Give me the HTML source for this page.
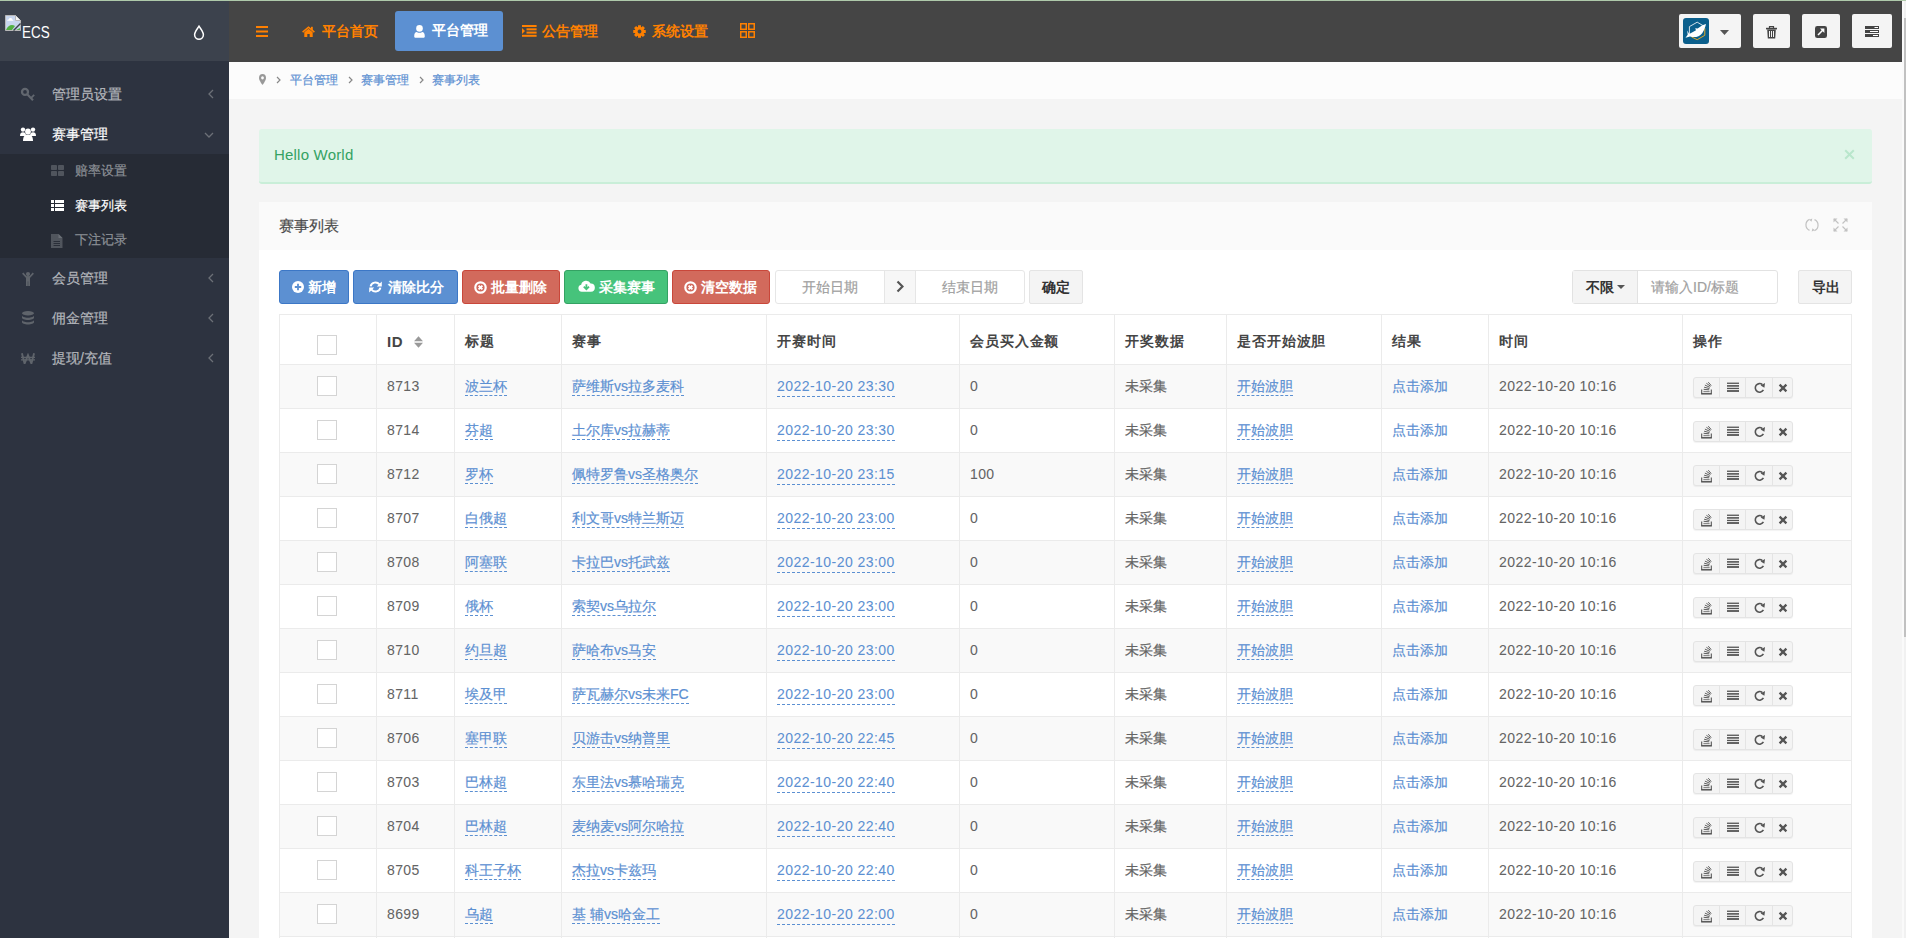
<!DOCTYPE html>
<html><head><meta charset="utf-8"><title>ECS</title>
<style>
*{box-sizing:border-box;margin:0;padding:0}
html,body{width:1906px;height:938px;overflow:hidden}
body{position:relative;background:#f4f4f4;font-family:"Liberation Sans",sans-serif;font-size:14px;color:#646464;-webkit-text-stroke:0.2px currentColor}
.abs{position:absolute}
.nv,#nvact span,.btn,.bdef,#tbl th,.inp span.abs,#logo .ecs,#alert .tx{-webkit-text-stroke:0}
#topline{left:0;top:0;width:1906px;height:1px;background:#aec9aa}
/* sidebar */
#side{left:0;top:1px;width:229px;height:937px;background:#2d3340}
#logo{left:0;top:0;width:229px;height:60px;background:#3c424d}
#logo .bimg{position:absolute;left:5px;top:14px;width:16px;height:16px}
#logo .ecs{position:absolute;left:22px;top:22px;font-size:16px;color:#fff;line-height:20px;transform:scaleX(0.84);transform-origin:0 0}
#logo .drop{position:absolute;left:193px;top:24px}
.mi{position:absolute;left:0;width:229px;height:40px;color:#b3b6bb}
.mi .tx{position:absolute;left:52px;top:11px;line-height:18px;font-size:14px}
.mi .ic{position:absolute;left:20px;top:13px;width:16px;height:14px}
.mi .chev{position:absolute;left:207px;top:14px}
.mi.act{color:#fff}
#sub{left:0;top:153px;width:229px;height:104px;background:#262b35}
.si{position:absolute;left:0;width:229px;height:35px;color:#8d9197}
.si .tx{position:absolute;left:75px;top:8px;line-height:18px;font-size:13px}
.si .ic{position:absolute;left:51px;top:11px}
.si.act{color:#fff}
/* navbar */
#nav{left:229px;top:1px;width:1673px;height:61px;background:#454545}
.nv{position:absolute;top:0;height:61px;color:#ff8000;font-weight:bold;font-size:14px}
.nv .tx{position:absolute;top:21px;line-height:18px;white-space:nowrap}
#nvact{position:absolute;left:166px;top:10px;width:108px;height:40px;background:#5c90d2;border-radius:3px}
.tbtn{position:absolute;top:13px;height:34px;background:#f4f4f4;border-radius:2px}
/* scrollbar */
#sbar{left:1902px;top:1px;width:4px;height:937px;background:#f1f1f1;border-left:2px solid #fafafa}
#sthumb{left:1904px;top:18px;width:2px;height:619px;background:#c1c1c1}
/* breadcrumb */
#bc{left:229px;top:62px;width:1673px;height:37px;background:#fcfcfc}
#bc .t{position:absolute;top:11px;font-size:12px;line-height:14px;color:#5c90d2}
#bc .g{position:absolute;top:10px;font-size:12px;line-height:14px;color:#777}
/* alert */
#alert{left:259px;top:129px;width:1613px;height:55px;background:#e0f5e9;border-bottom:2px solid #c9eed8;border-radius:3px}
#alert .tx{position:absolute;left:15px;top:17px;font-size:15px;line-height:18px;color:#34a263;letter-spacing:0.2px}
#alert .x{position:absolute;left:1585px;top:20px}
/* panel */
#panel{left:259px;top:202px;width:1613px;height:736px;background:#fff}
#ph{left:0;top:0;width:1613px;height:48px;background:#fafafa}
#ph .tx{position:absolute;left:20px;top:15px;font-size:15px;line-height:18px;color:#4a4a4a}
.btn{position:absolute;top:68px;height:34px;border:1px solid;border-radius:3px;color:#fff;font-weight:bold;font-size:14px;white-space:nowrap}
.btn .tx{position:absolute;top:7px;line-height:18px}
.btn .ic{position:absolute;top:10px}
.bp{background:#5c90d2;border-color:#3c77c6}
.bd{background:#d26a5c;border-color:#c9473a}
.bs{background:#46c37b;border-color:#34a263}
.inp{position:absolute;top:68px;height:34px;border:1px solid #e6e6e6;border-radius:3px;background:#fff}
.ph{color:#a0a0a0;position:absolute;top:7px;line-height:18px;white-space:nowrap}
.bdef{position:absolute;top:68px;height:34px;border:1px solid #e4e4e4;border-radius:2px;background:#f4f4f4;color:#333;font-weight:bold}
.bdef .tx{position:absolute;top:7px;line-height:18px;white-space:nowrap}
/* table */
#tbl{position:absolute;left:20px;top:112px;border-collapse:collapse;table-layout:fixed;width:1572px}
#tbl td,#tbl th{border:1px solid #ebebeb;padding:0 0 0 10px;text-align:left;vertical-align:middle;white-space:nowrap;overflow:hidden}
#tbl th{height:50px;font-weight:bold;color:#454545;padding-top:4px;letter-spacing:0.9px}
#tbl td{height:44px;color:#646464;padding-bottom:1px}
#tbl tr.odd td{background:#f9f9f9}
#tbl tr.even td{background:#fff}
#tbl a{color:#5c90d2;border-bottom:1px dashed #5c90d2;text-decoration:none;padding-bottom:1px}
#tbl a.dt,#tbl td.tm{letter-spacing:0.45px}
#tbl a.dt{padding-bottom:2px}
#tbl td:nth-child(2),#tbl td:nth-child(6){letter-spacing:0.4px}
#tbl td:nth-child(2),#tbl td:nth-child(6),#tbl td.tm,#tbl a.dt{-webkit-text-stroke:0.05px currentColor}
#tbl td .cb{position:relative;top:-1px}
#tbl a.cj{position:relative;top:1px}
#tbl .cjt{position:relative;top:0.5px}
#tbl .lk{color:#5c90d2}
#tbl td.c0,#tbl th.c0{padding:0}
.cb{display:block;width:20px;height:20px;border:1px solid #d4d4d4;background:#fff;margin:0 0 0 37px}
.ops{position:relative;top:1px;display:flex;width:100px;height:21px;border:1px solid #e4e4e4;border-radius:3px;background:#f4f4f4;box-shadow:0 1px 1px rgba(0,0,0,.05)}
.op{display:flex;align-items:center;justify-content:center;height:19px;padding-top:2px;border-right:1px solid #e4e4e4}
.o1{width:26px}.o2{width:26px}.o3{width:27px}.o4{width:19px;border-right:0}
</style></head>
<body>
<div id="topline" class="abs"></div>

<div id="side" class="abs">
  <div id="logo" class="abs">
    <svg class="bimg" viewBox="0 0 16 16"><path d="M0.5 0.5h10l5 5v10h-15z" fill="#c8d6ee" stroke="#b8b8b8"/><path d="M10.5 0.5v5h5" fill="#f4f4f4" stroke="#b8b8b8"/><path d="M1 15c2-5 6-6 9-4l-3 4z" fill="#52b043"/><path d="M11 15l4-2v2z" fill="#52b043"/><path d="M15.5 8.5L8.5 15.5" stroke="#3b414b" stroke-width="1.5"/><path d="M2.2 5.8c0-.9.7-1.4 1.5-1.3.4-1 1.2-1.5 2.1-1.4.9.1 1.5.8 1.6 1.6.6 0 1 .5 1 1.1z" fill="#fff"/></svg>
    <div class="ecs">ECS</div>
    <svg class="drop" width="12" height="15" viewBox="0 0 12 15"><path d="M6 1.2C4.5 3.6 1.6 6.8 1.6 9.8a4.4 4.4 0 0 0 8.8 0C10.4 6.8 7.5 3.6 6 1.2z" fill="none" stroke="#fff" stroke-width="1.5"/></svg>
  </div>
  <!-- menu items y relative to side top (1) -->
  <div class="mi" style="top:73px"><svg class="ic" width="16" height="14" viewBox="0 0 16 14" style="width:16px;height:14px"><circle cx="5" cy="4.9" r="3" fill="none" stroke="#62676f" stroke-width="2.3"/><path d="M7.2 7.2L13 13.2" stroke="#62676f" stroke-width="2.1"/><path d="M11.2 10.8L14.2 7.9" stroke="#62676f" stroke-width="1.8"/></svg><span class="tx">管理员设置</span><svg class="chev" width="8" height="12" viewBox="0 0 8 12"><path d="M6 2L2 6l4 4" fill="none" stroke="#6c7077" stroke-width="1.3"/></svg></div>
  <div class="mi act" style="top:113px"><svg class="ic" viewBox="0 0 16 14" style="top:13px"><circle cx="3" cy="2.6" r="2.2" fill="#fff"/><circle cx="13" cy="2.6" r="2.2" fill="#fff"/><circle cx="8" cy="4.4" r="2.9" fill="#fff"/><path d="M0 9c0-3 1.2-3.8 3-3.8s3 .8 3 3.8z" fill="#fff"/><path d="M10 9c0-3 1.2-3.8 3-3.8s3 .8 3 3.8z" fill="#fff"/><path d="M3 14c0-5 2-6.6 5-6.6s5 1.6 5 6.6z" fill="#fff"/></svg><span class="tx">赛事管理</span><svg class="chev" width="12" height="8" viewBox="0 0 12 8" style="left:203px;top:17px"><path d="M2 2l4 4 4-4" fill="none" stroke="#6c7077" stroke-width="1.3"/></svg></div>
  <div id="sub" class="abs">
    <div class="si" style="top:0"><svg class="ic" width="13" height="11" viewBox="0 0 13 11"><rect x="0" y="0" width="6" height="5" rx="0.8" fill="#50555d"/><rect x="7" y="0" width="6" height="5" rx="0.8" fill="#50555d"/><rect x="0" y="6" width="6" height="5" rx="0.8" fill="#50555d"/><rect x="7" y="6" width="6" height="5" rx="0.8" fill="#50555d"/></svg><span class="tx">赔率设置</span></div>
    <div class="si act" style="top:35px"><svg class="ic" width="13" height="11" viewBox="0 0 13 11"><rect x="0" y="0" width="3" height="3" fill="#fff"/><rect x="4" y="0" width="9" height="3" fill="#fff"/><rect x="0" y="4" width="3" height="3" fill="#fff"/><rect x="4" y="4" width="9" height="3" fill="#fff"/><rect x="0" y="8" width="3" height="3" fill="#fff"/><rect x="4" y="8" width="9" height="3" fill="#fff"/></svg><span class="tx">赛事列表</span></div>
    <div class="si" style="top:69px"><svg class="ic" width="12" height="14" viewBox="0 0 12 14" style="top:11px"><path d="M0 0h7.5l4 4v10H0z" fill="#50555d"/><path d="M7.5 0v4h4z" fill="#6a6f76"/><path d="M2.5 7.5h6.5M2.5 9.5h6.5M2.5 11.5h6.5" stroke="#262b35" stroke-width="0.9"/></svg><span class="tx">下注记录</span></div>
  </div>
  <div class="mi" style="top:257px"><svg class="ic" width="12" height="14" viewBox="0 0 12 14" style="top:14px;left:22px;width:12px;height:14px"><circle cx="6" cy="2.1" r="2.1" fill="#5f646b"/><path d="M0.7 1.2L4.2 5H7.8L11.3 1.2" fill="none" stroke="#5f646b" stroke-width="1.7"/><rect x="4" y="4.4" width="4" height="5" fill="#5f646b"/><rect x="4" y="9" width="1.8" height="5" fill="#5f646b"/><rect x="6.2" y="9" width="1.8" height="5" fill="#5f646b"/></svg><span class="tx">会员管理</span><svg class="chev" width="8" height="12" viewBox="0 0 8 12"><path d="M6 2L2 6l4 4" fill="none" stroke="#6c7077" stroke-width="1.3"/></svg></div>
  <div class="mi" style="top:297px"><svg class="ic" viewBox="0 0 16 14"><ellipse cx="8" cy="2.2" rx="6" ry="2.2" fill="#5f646b"/><path d="M2 4.5c0 1.2 2.7 2.2 6 2.2s6-1 6-2.2v2.3c0 1.2-2.7 2.2-6 2.2s-6-1-6-2.2z" fill="#5f646b"/><path d="M2 9c0 1.2 2.7 2.2 6 2.2s6-1 6-2.2v2.3c0 1.2-2.7 2.2-6 2.2s-6-1-6-2.2z" fill="#5f646b"/></svg><span class="tx">佣金管理</span><svg class="chev" width="8" height="12" viewBox="0 0 8 12"><path d="M6 2L2 6l4 4" fill="none" stroke="#6c7077" stroke-width="1.3"/></svg></div>
  <div class="mi" style="top:337px"><svg class="ic" width="14" height="11" viewBox="0 0 14 11" style="top:15px;left:21px;width:14px;height:11px"><path d="M0.9 0.3l2.7 10.2 3.4-8.4 3.4 8.4 2.7-10.2" fill="none" stroke="#5f646b" stroke-width="1.9"/><path d="M0 4.3h14M0 6.9h14" stroke="#5f646b" stroke-width="1.3"/></svg><span class="tx">提现/充值</span><svg class="chev" width="8" height="12" viewBox="0 0 8 12"><path d="M6 2L2 6l4 4" fill="none" stroke="#6c7077" stroke-width="1.3"/></svg></div>
</div>

<div id="nav" class="abs">
  <svg class="abs" style="left:27px;top:25px" width="12" height="11" viewBox="0 0 12 11"><rect x="0" y="0" width="12" height="2" fill="#ff8000"/><rect x="0" y="4.5" width="12" height="2" fill="#ff8000"/><rect x="0" y="9" width="12" height="2" fill="#ff8000"/></svg>
  <div class="nv" style="left:73px;width:80px">
    <svg class="abs" style="left:0;top:25px" width="13" height="12" viewBox="0 0 13 12"><path d="M0.6 6.2L6.5 1.2l5.9 5" fill="none" stroke="#ff8000" stroke-width="1.6"/><rect x="9" y="0.8" width="1.8" height="3.2" fill="#ff8000"/><path d="M2.3 6.2L6.5 2.7l4.2 3.5V11H7.7V8H5.3v3H2.3z" fill="#ff8000"/></svg>
    <span class="tx" style="left:20px">平台首页</span>
  </div>
  <div id="nvact">
    <svg class="abs" style="left:19px;top:14px" width="11" height="13" viewBox="0 0 11 13"><circle cx="5.5" cy="3.4" r="3.3" fill="#fff"/><path d="M0.2 11.2c0-3 1.2-4.3 2.6-4.3 .8.6 1.7.9 2.7.9s1.9-.3 2.7-.9c1.4 0 2.6 1.3 2.6 4.3 0 1-.7 1.6-1.6 1.6H1.8c-.9 0-1.6-.6-1.6-1.6z" fill="#fff"/></svg>
    <span class="abs" style="left:37px;top:10px;line-height:18px;color:#fff;font-weight:bold;white-space:nowrap">平台管理</span>
  </div>
  <div class="nv" style="left:292px;width:80px">
    <svg class="abs" style="left:1px;top:24px" width="15" height="12" viewBox="0 0 15 12"><rect x="0" y="0" width="14.6" height="2" fill="#ff8000"/><rect x="4.5" y="3.3" width="10.1" height="2" fill="#ff8000"/><rect x="4.5" y="6.6" width="10.1" height="2" fill="#ff8000"/><rect x="0" y="9.8" width="14.6" height="2" fill="#ff8000"/><path d="M0 3l3 3-3 3z" fill="#ff8000"/></svg>
    <span class="tx" style="left:21px">公告管理</span>
  </div>
  <div class="nv" style="left:403px;width:80px">
    <svg class="abs" style="left:1px;top:24px" width="13" height="13" viewBox="0 0 13 13"><path fill-rule="evenodd" d="M10.94 4.97 L12.74 5.06 L12.74 7.94 L10.94 8.03 L10.72 8.56 L11.93 9.89 L9.89 11.93 L8.56 10.72 L8.03 10.94 L7.94 12.74 L5.06 12.74 L4.97 10.94 L4.44 10.72 L3.11 11.93 L1.07 9.89 L2.28 8.56 L2.06 8.03 L0.26 7.94 L0.26 5.06 L2.06 4.97 L2.28 4.44 L1.07 3.11 L3.11 1.07 L4.44 2.28 L4.97 2.06 L5.06 0.26 L7.94 0.26 L8.03 2.06 L8.56 2.28 L9.89 1.07 L11.93 3.11 L10.72 4.44Z M6.5 4.6a1.9 1.9 0 1 0 0.01 0z" fill="#ff8000"/></svg>
    <span class="tx" style="left:20px">系统设置</span>
  </div>
  <svg class="abs" style="left:511px;top:22px" width="15" height="15" viewBox="0 0 15 15"><rect x="0.75" y="0.75" width="5.5" height="5.5" fill="none" stroke="#ff8000" stroke-width="1.5"/><rect x="8.75" y="0.75" width="5.5" height="5.5" fill="none" stroke="#ff8000" stroke-width="1.5"/><rect x="0.75" y="8.75" width="5.5" height="5.5" fill="none" stroke="#ff8000" stroke-width="1.5"/><rect x="8.75" y="8.75" width="5.5" height="5.5" fill="none" stroke="#ff8000" stroke-width="1.5"/></svg>

  <div class="tbtn" style="left:1450px;width:62px">
    <svg class="abs" style="left:4px;top:4px" width="26" height="26" viewBox="0 0 26 26"><rect width="26" height="26" rx="3" fill="#0b5f8c"/><path d="M6.4 17V8.6L14.2 4.2 20 7.6" fill="none" stroke="#e8eef3" stroke-width="0.9"/><path d="M21.8 10.2v7.1l-7.6 4.4-5.7-2.8" fill="none" stroke="#e0a92a" stroke-width="1"/><path d="M23 6C20 6.8 17 8.6 14.6 10.6L12.2 10.2 13 12.3C10.6 13.8 8.2 15 6.2 16L4.2 12.6 4.7 16.8 2.5 19.8 7 18.4C11 19.8 16.2 19.2 19.2 15.2 21.2 12.4 22.2 9.2 23 6Z" fill="#fff"/></svg>
    <svg class="abs" style="left:41px;top:16px" width="9" height="5" viewBox="0 0 9 5"><path d="M0 0h9L4.5 5z" fill="#555"/></svg>
  </div>
  <div class="tbtn" style="left:1524px;width:37px">
    <svg class="abs" style="left:13px;top:12px" width="11" height="13" viewBox="0 0 11 13"><path d="M3.5 2V.6h4V2" fill="none" stroke="#444" stroke-width="1.2"/><rect x="0" y="1.8" width="11" height="1.6" fill="#444"/><path d="M1.2 3.6h8.6l-.6 9H1.8z" fill="#444"/><path d="M3.5 5v6M5.5 5v6M7.5 5v6" stroke="#f4f4f4" stroke-width="1"/></svg>
  </div>
  <div class="tbtn" style="left:1573px;width:38px">
    <svg class="abs" style="left:13px;top:12px" width="12" height="12" viewBox="0 0 12 12"><rect width="12" height="12" rx="2.3" fill="#444"/><path d="M3 9L8.2 3.8" stroke="#fff" stroke-width="1.6"/><path d="M5 2.6h4.4V7z" fill="#fff"/></svg>
  </div>
  <div class="tbtn" style="left:1623px;width:40px">
    <svg class="abs" style="left:13px;top:12px" width="14" height="11" viewBox="0 0 14 11"><rect x="0" y="0" width="14" height="3" fill="#444"/><rect x="0" y="4" width="14" height="3" fill="#444"/><rect x="0" y="8" width="14" height="3" fill="#444"/><rect x="9.5" y="1" width="3.5" height="1" fill="#fff"/><rect x="5" y="5" width="8" height="1" fill="#fff"/><rect x="8" y="9" width="5" height="1" fill="#fff"/></svg>
  </div>
</div>

<div id="sbar" class="abs"></div>
<div id="sthumb" class="abs"></div>

<div id="bc" class="abs">
  <svg class="abs" style="left:30px;top:12px" width="7" height="11" viewBox="0 0 8 11" preserveAspectRatio="none"><path d="M4 0a4 4 0 0 0-4 4c0 2.5 4 7 4 7s4-4.5 4-7a4 4 0 0 0-4-4z" fill="#999"/><circle cx="4" cy="3.8" r="1.6" fill="#fcfcfc"/></svg>
  <svg class="abs" style="left:47px;top:14px" width="5" height="8" viewBox="0 0 5 8"><path d="M1 1l3 3-3 3" fill="none" stroke="#888" stroke-width="1.2"/></svg>
  <span class="t" style="left:61px">平台管理</span>
  <svg class="abs" style="left:119px;top:14px" width="5" height="8" viewBox="0 0 5 8"><path d="M1 1l3 3-3 3" fill="none" stroke="#888" stroke-width="1.2"/></svg>
  <span class="t" style="left:132px">赛事管理</span>
  <svg class="abs" style="left:190px;top:14px" width="5" height="8" viewBox="0 0 5 8"><path d="M1 1l3 3-3 3" fill="none" stroke="#888" stroke-width="1.2"/></svg>
  <span class="t" style="left:203px">赛事列表</span>
</div>

<div id="alert" class="abs">
  <span class="tx">Hello World</span>
  <svg class="x" width="11" height="11" viewBox="0 0 11 11"><path d="M1.2 1.2l8.6 8.6M9.8 1.2l-8.6 8.6" stroke="#b9e6cc" stroke-width="2"/></svg>
</div>

<div id="panel" class="abs">
  <div id="ph" class="abs">
    <span class="tx">赛事列表</span>
    <svg class="abs" style="left:1546px;top:16px" width="14" height="14" viewBox="0 0 14 14"><path d="M4.6 1.4A6 6 0 0 0 4.5 12.4M9.4 12.6A6 6 0 0 0 9.5 1.6" fill="none" stroke="#c2c2c2" stroke-width="1.2"/><path d="M7.3 0.5l-3 1.2 2.2 2z M6.7 13.5l3-1.2-2.2-2z" fill="#c2c2c2"/></svg>
    <svg class="abs" style="left:1574px;top:16px" width="15" height="14" viewBox="0 0 15 14"><path d="M1 1l4.5 4.5M14 1L9.5 5.5M1 13l4.5-4.5M14 13l-4.5-4.5" stroke="#c2c2c2" stroke-width="1.2"/><path d="M0.5 0.5h4l-4 4zM14.5 0.5h-4l4 4zM0.5 13.5h4l-4-4zM14.5 13.5h-4l4-4z" fill="#c2c2c2"/></svg>
  </div>

  <div class="btn bp" style="left:20px;width:70px"><svg class="ic" style="left:12px" width="12" height="12" viewBox="0 0 12 12"><circle cx="6" cy="6" r="6" fill="#fff"/><path d="M6 2.8v6.4M2.8 6h6.4" stroke="#5c90d2" stroke-width="1.8"/></svg><span class="tx" style="left:28px">新增</span></div>
  <div class="btn bp" style="left:94px;width:105px"><svg class="ic" style="left:15px" width="13" height="12" viewBox="0 0 13 12"><path d="M1.6 5.4A5 5 0 0 1 10.4 3.4M11.4 6.6A5 5 0 0 1 2.6 8.6" fill="none" stroke="#fff" stroke-width="2"/><path d="M12.8 0.4V5.4H7.8z M0.2 11.6V6.6H5.2z" fill="#fff"/></svg><span class="tx" style="left:34px">清除比分</span></div>
  <div class="btn bd" style="left:203px;width:98px"><svg class="ic" style="left:11px" width="13" height="13" viewBox="0 0 13 13"><circle cx="6.5" cy="6.5" r="5.2" fill="none" stroke="#fff" stroke-width="2.2"/><path d="M4.6 4.6l3.8 3.8M8.4 4.6l-3.8 3.8" stroke="#fff" stroke-width="2"/></svg><span class="tx" style="left:28px">批量删除</span></div>
  <div class="btn bs" style="left:305px;width:104px"><svg class="ic" style="left:13px;top:9px" width="17" height="12" viewBox="0 0 17 12"><path d="M3.8 11.8A3.6 3.6 0 0 1 3.2 4.7 5 5 0 0 1 12.6 3.6 4.1 4.1 0 0 1 12.9 11.8z" fill="#fff"/><path d="M8.4 4.2v4.6M5.8 6.6l2.6 2.7 2.6-2.7" fill="none" stroke="#46c37b" stroke-width="1.8"/></svg><span class="tx" style="left:34px">采集赛事</span></div>
  <div class="btn bd" style="left:413px;width:98px"><svg class="ic" style="left:11px" width="13" height="13" viewBox="0 0 13 13"><circle cx="6.5" cy="6.5" r="5.2" fill="none" stroke="#fff" stroke-width="2.2"/><path d="M4.6 4.6l3.8 3.8M8.4 4.6l-3.8 3.8" stroke="#fff" stroke-width="2"/></svg><span class="tx" style="left:28px">清空数据</span></div>

  <div class="inp" style="left:516px;width:250px">
    <span class="ph" style="left:26px">开始日期</span>
    <div class="abs" style="left:108px;top:0;width:32px;height:32px;background:#f7f7f7;border-left:1px solid #e6e6e6;border-right:1px solid #e6e6e6"></div>
    <svg class="abs" style="left:120px;top:9px" width="8" height="13" viewBox="0 0 8 13"><path d="M1.5 1.5l5 5-5 5" fill="none" stroke="#555" stroke-width="2.2"/></svg>
    <span class="ph" style="left:166px">结束日期</span>
  </div>
  <div class="bdef" style="left:770px;width:54px"><span class="tx" style="left:12px">确定</span></div>

  <div class="inp" style="left:1313px;width:206px;border-color:#e2e2e2">
    <div class="abs" style="left:0;top:0;width:65px;height:32px;background:#f4f4f4;border-right:1px solid #e2e2e2"></div>
    <span class="abs" style="left:13px;top:7px;line-height:18px;color:#333;font-weight:bold">不限</span>
    <svg class="abs" style="left:44px;top:14px" width="8" height="4" viewBox="0 0 8 4"><path d="M0 0h8L4 4z" fill="#555"/></svg>
    <span class="ph" style="left:78px">请输入ID/标题</span>
  </div>
  <div class="bdef" style="left:1539px;width:54px"><span class="tx" style="left:13px">导出</span></div>

  <table id="tbl">
    <colgroup><col style="width:97px"><col style="width:78px"><col style="width:107px"><col style="width:205px"><col style="width:193px"><col style="width:155px"><col style="width:112px"><col style="width:155px"><col style="width:107px"><col style="width:194px"><col style="width:169px"></colgroup>
    <tr><th class="c0"><span class="cb" style="margin-top:10px"></span></th><th><span style="font-size:15px;letter-spacing:0.6px">ID</span><svg width="9" height="12" viewBox="0 0 9 12" style="margin-left:10.5px;vertical-align:-1px"><path d="M0 5.2h9L4.5 0.2z M0 6.8h9l-4.5 5z" fill="#999"/></svg></th><th>标题</th><th>赛事</th><th>开赛时间</th><th>会员买入金额</th><th>开奖数据</th><th>是否开始波胆</th><th>结果</th><th>时间</th><th>操作</th></tr>
<tr class="odd"><td class="c0"><span class="cb"></span></td><td>8713</td><td><a class="cj">波兰杯</a></td><td><a class="cj">萨维斯vs拉多麦科</a></td><td><a class="dt">2022-10-20 23:30</a></td><td>0</td><td><span class="cjt">未采集</span></td><td><a class="cj">开始波胆</a></td><td><span class="lk cjt">点击添加</span></td><td class="tm">2022-10-20 10:16</td><td><div class="ops"><span class="op o1"><svg width="11" height="13" viewBox="0 0 11 13" style="margin-top:0"><path d="M0.7 7.6v4.2h9.6V7.6" fill="none" stroke="#555" stroke-width="1.1"/><rect x="0.2" y="11.2" width="10.6" height="1.2" fill="#555"/><rect x="2.4" y="8.9" width="6.2" height="1.3" fill="#8a8a8a"/><path d="M2.6 7.3l5.6.5M3.1 5.2l5.4 1.4M3.9 3.1l5 2.2M5.4 1.3l4.2 3M7.3 0.2l2.9 3.4" stroke="#555" stroke-width="0.95"/></svg></span><span class="op o2"><svg width="12" height="10" viewBox="0 0 12 10" style="margin-top:-2px"><rect x="0" y="0.6" width="12" height="1.3" fill="#555"/><rect x="0" y="3.1" width="12" height="1.6" fill="#555"/><rect x="0" y="5.8" width="12" height="1.3" fill="#555"/><rect x="0" y="8.1" width="12" height="1.8" fill="#555"/></svg></span><span class="op o3"><svg width="12" height="12" viewBox="0 0 12 12" style="margin-left:1px;margin-top:-1px"><path d="M9.4 7.9A4.3 4.3 0 1 1 8.4 2.6" fill="none" stroke="#555" stroke-width="1.6"/><path d="M6.6 3.4L11 1l-.6 4.8z" fill="#555"/></svg></span><span class="op o4"><svg width="10" height="10" viewBox="0 0 10 10"><path d="M1.6 1.6l6.8 6.8M8.4 1.6l-6.8 6.8" stroke="#555" stroke-width="2.3"/></svg></span></div></td></tr>
<tr class="even"><td class="c0"><span class="cb"></span></td><td>8714</td><td><a class="cj">芬超</a></td><td><a class="cj">土尔库vs拉赫蒂</a></td><td><a class="dt">2022-10-20 23:30</a></td><td>0</td><td><span class="cjt">未采集</span></td><td><a class="cj">开始波胆</a></td><td><span class="lk cjt">点击添加</span></td><td class="tm">2022-10-20 10:16</td><td><div class="ops"><span class="op o1"><svg width="11" height="13" viewBox="0 0 11 13" style="margin-top:0"><path d="M0.7 7.6v4.2h9.6V7.6" fill="none" stroke="#555" stroke-width="1.1"/><rect x="0.2" y="11.2" width="10.6" height="1.2" fill="#555"/><rect x="2.4" y="8.9" width="6.2" height="1.3" fill="#8a8a8a"/><path d="M2.6 7.3l5.6.5M3.1 5.2l5.4 1.4M3.9 3.1l5 2.2M5.4 1.3l4.2 3M7.3 0.2l2.9 3.4" stroke="#555" stroke-width="0.95"/></svg></span><span class="op o2"><svg width="12" height="10" viewBox="0 0 12 10" style="margin-top:-2px"><rect x="0" y="0.6" width="12" height="1.3" fill="#555"/><rect x="0" y="3.1" width="12" height="1.6" fill="#555"/><rect x="0" y="5.8" width="12" height="1.3" fill="#555"/><rect x="0" y="8.1" width="12" height="1.8" fill="#555"/></svg></span><span class="op o3"><svg width="12" height="12" viewBox="0 0 12 12" style="margin-left:1px;margin-top:-1px"><path d="M9.4 7.9A4.3 4.3 0 1 1 8.4 2.6" fill="none" stroke="#555" stroke-width="1.6"/><path d="M6.6 3.4L11 1l-.6 4.8z" fill="#555"/></svg></span><span class="op o4"><svg width="10" height="10" viewBox="0 0 10 10"><path d="M1.6 1.6l6.8 6.8M8.4 1.6l-6.8 6.8" stroke="#555" stroke-width="2.3"/></svg></span></div></td></tr>
<tr class="odd"><td class="c0"><span class="cb"></span></td><td>8712</td><td><a class="cj">罗杯</a></td><td><a class="cj">佩特罗鲁vs圣格奥尔</a></td><td><a class="dt">2022-10-20 23:15</a></td><td>100</td><td><span class="cjt">未采集</span></td><td><a class="cj">开始波胆</a></td><td><span class="lk cjt">点击添加</span></td><td class="tm">2022-10-20 10:16</td><td><div class="ops"><span class="op o1"><svg width="11" height="13" viewBox="0 0 11 13" style="margin-top:0"><path d="M0.7 7.6v4.2h9.6V7.6" fill="none" stroke="#555" stroke-width="1.1"/><rect x="0.2" y="11.2" width="10.6" height="1.2" fill="#555"/><rect x="2.4" y="8.9" width="6.2" height="1.3" fill="#8a8a8a"/><path d="M2.6 7.3l5.6.5M3.1 5.2l5.4 1.4M3.9 3.1l5 2.2M5.4 1.3l4.2 3M7.3 0.2l2.9 3.4" stroke="#555" stroke-width="0.95"/></svg></span><span class="op o2"><svg width="12" height="10" viewBox="0 0 12 10" style="margin-top:-2px"><rect x="0" y="0.6" width="12" height="1.3" fill="#555"/><rect x="0" y="3.1" width="12" height="1.6" fill="#555"/><rect x="0" y="5.8" width="12" height="1.3" fill="#555"/><rect x="0" y="8.1" width="12" height="1.8" fill="#555"/></svg></span><span class="op o3"><svg width="12" height="12" viewBox="0 0 12 12" style="margin-left:1px;margin-top:-1px"><path d="M9.4 7.9A4.3 4.3 0 1 1 8.4 2.6" fill="none" stroke="#555" stroke-width="1.6"/><path d="M6.6 3.4L11 1l-.6 4.8z" fill="#555"/></svg></span><span class="op o4"><svg width="10" height="10" viewBox="0 0 10 10"><path d="M1.6 1.6l6.8 6.8M8.4 1.6l-6.8 6.8" stroke="#555" stroke-width="2.3"/></svg></span></div></td></tr>
<tr class="even"><td class="c0"><span class="cb"></span></td><td>8707</td><td><a class="cj">白俄超</a></td><td><a class="cj">利文哥vs特兰斯迈</a></td><td><a class="dt">2022-10-20 23:00</a></td><td>0</td><td><span class="cjt">未采集</span></td><td><a class="cj">开始波胆</a></td><td><span class="lk cjt">点击添加</span></td><td class="tm">2022-10-20 10:16</td><td><div class="ops"><span class="op o1"><svg width="11" height="13" viewBox="0 0 11 13" style="margin-top:0"><path d="M0.7 7.6v4.2h9.6V7.6" fill="none" stroke="#555" stroke-width="1.1"/><rect x="0.2" y="11.2" width="10.6" height="1.2" fill="#555"/><rect x="2.4" y="8.9" width="6.2" height="1.3" fill="#8a8a8a"/><path d="M2.6 7.3l5.6.5M3.1 5.2l5.4 1.4M3.9 3.1l5 2.2M5.4 1.3l4.2 3M7.3 0.2l2.9 3.4" stroke="#555" stroke-width="0.95"/></svg></span><span class="op o2"><svg width="12" height="10" viewBox="0 0 12 10" style="margin-top:-2px"><rect x="0" y="0.6" width="12" height="1.3" fill="#555"/><rect x="0" y="3.1" width="12" height="1.6" fill="#555"/><rect x="0" y="5.8" width="12" height="1.3" fill="#555"/><rect x="0" y="8.1" width="12" height="1.8" fill="#555"/></svg></span><span class="op o3"><svg width="12" height="12" viewBox="0 0 12 12" style="margin-left:1px;margin-top:-1px"><path d="M9.4 7.9A4.3 4.3 0 1 1 8.4 2.6" fill="none" stroke="#555" stroke-width="1.6"/><path d="M6.6 3.4L11 1l-.6 4.8z" fill="#555"/></svg></span><span class="op o4"><svg width="10" height="10" viewBox="0 0 10 10"><path d="M1.6 1.6l6.8 6.8M8.4 1.6l-6.8 6.8" stroke="#555" stroke-width="2.3"/></svg></span></div></td></tr>
<tr class="odd"><td class="c0"><span class="cb"></span></td><td>8708</td><td><a class="cj">阿塞联</a></td><td><a class="cj">卡拉巴vs托武兹</a></td><td><a class="dt">2022-10-20 23:00</a></td><td>0</td><td><span class="cjt">未采集</span></td><td><a class="cj">开始波胆</a></td><td><span class="lk cjt">点击添加</span></td><td class="tm">2022-10-20 10:16</td><td><div class="ops"><span class="op o1"><svg width="11" height="13" viewBox="0 0 11 13" style="margin-top:0"><path d="M0.7 7.6v4.2h9.6V7.6" fill="none" stroke="#555" stroke-width="1.1"/><rect x="0.2" y="11.2" width="10.6" height="1.2" fill="#555"/><rect x="2.4" y="8.9" width="6.2" height="1.3" fill="#8a8a8a"/><path d="M2.6 7.3l5.6.5M3.1 5.2l5.4 1.4M3.9 3.1l5 2.2M5.4 1.3l4.2 3M7.3 0.2l2.9 3.4" stroke="#555" stroke-width="0.95"/></svg></span><span class="op o2"><svg width="12" height="10" viewBox="0 0 12 10" style="margin-top:-2px"><rect x="0" y="0.6" width="12" height="1.3" fill="#555"/><rect x="0" y="3.1" width="12" height="1.6" fill="#555"/><rect x="0" y="5.8" width="12" height="1.3" fill="#555"/><rect x="0" y="8.1" width="12" height="1.8" fill="#555"/></svg></span><span class="op o3"><svg width="12" height="12" viewBox="0 0 12 12" style="margin-left:1px;margin-top:-1px"><path d="M9.4 7.9A4.3 4.3 0 1 1 8.4 2.6" fill="none" stroke="#555" stroke-width="1.6"/><path d="M6.6 3.4L11 1l-.6 4.8z" fill="#555"/></svg></span><span class="op o4"><svg width="10" height="10" viewBox="0 0 10 10"><path d="M1.6 1.6l6.8 6.8M8.4 1.6l-6.8 6.8" stroke="#555" stroke-width="2.3"/></svg></span></div></td></tr>
<tr class="even"><td class="c0"><span class="cb"></span></td><td>8709</td><td><a class="cj">俄杯</a></td><td><a class="cj">索契vs乌拉尔</a></td><td><a class="dt">2022-10-20 23:00</a></td><td>0</td><td><span class="cjt">未采集</span></td><td><a class="cj">开始波胆</a></td><td><span class="lk cjt">点击添加</span></td><td class="tm">2022-10-20 10:16</td><td><div class="ops"><span class="op o1"><svg width="11" height="13" viewBox="0 0 11 13" style="margin-top:0"><path d="M0.7 7.6v4.2h9.6V7.6" fill="none" stroke="#555" stroke-width="1.1"/><rect x="0.2" y="11.2" width="10.6" height="1.2" fill="#555"/><rect x="2.4" y="8.9" width="6.2" height="1.3" fill="#8a8a8a"/><path d="M2.6 7.3l5.6.5M3.1 5.2l5.4 1.4M3.9 3.1l5 2.2M5.4 1.3l4.2 3M7.3 0.2l2.9 3.4" stroke="#555" stroke-width="0.95"/></svg></span><span class="op o2"><svg width="12" height="10" viewBox="0 0 12 10" style="margin-top:-2px"><rect x="0" y="0.6" width="12" height="1.3" fill="#555"/><rect x="0" y="3.1" width="12" height="1.6" fill="#555"/><rect x="0" y="5.8" width="12" height="1.3" fill="#555"/><rect x="0" y="8.1" width="12" height="1.8" fill="#555"/></svg></span><span class="op o3"><svg width="12" height="12" viewBox="0 0 12 12" style="margin-left:1px;margin-top:-1px"><path d="M9.4 7.9A4.3 4.3 0 1 1 8.4 2.6" fill="none" stroke="#555" stroke-width="1.6"/><path d="M6.6 3.4L11 1l-.6 4.8z" fill="#555"/></svg></span><span class="op o4"><svg width="10" height="10" viewBox="0 0 10 10"><path d="M1.6 1.6l6.8 6.8M8.4 1.6l-6.8 6.8" stroke="#555" stroke-width="2.3"/></svg></span></div></td></tr>
<tr class="odd"><td class="c0"><span class="cb"></span></td><td>8710</td><td><a class="cj">约旦超</a></td><td><a class="cj">萨哈布vs马安</a></td><td><a class="dt">2022-10-20 23:00</a></td><td>0</td><td><span class="cjt">未采集</span></td><td><a class="cj">开始波胆</a></td><td><span class="lk cjt">点击添加</span></td><td class="tm">2022-10-20 10:16</td><td><div class="ops"><span class="op o1"><svg width="11" height="13" viewBox="0 0 11 13" style="margin-top:0"><path d="M0.7 7.6v4.2h9.6V7.6" fill="none" stroke="#555" stroke-width="1.1"/><rect x="0.2" y="11.2" width="10.6" height="1.2" fill="#555"/><rect x="2.4" y="8.9" width="6.2" height="1.3" fill="#8a8a8a"/><path d="M2.6 7.3l5.6.5M3.1 5.2l5.4 1.4M3.9 3.1l5 2.2M5.4 1.3l4.2 3M7.3 0.2l2.9 3.4" stroke="#555" stroke-width="0.95"/></svg></span><span class="op o2"><svg width="12" height="10" viewBox="0 0 12 10" style="margin-top:-2px"><rect x="0" y="0.6" width="12" height="1.3" fill="#555"/><rect x="0" y="3.1" width="12" height="1.6" fill="#555"/><rect x="0" y="5.8" width="12" height="1.3" fill="#555"/><rect x="0" y="8.1" width="12" height="1.8" fill="#555"/></svg></span><span class="op o3"><svg width="12" height="12" viewBox="0 0 12 12" style="margin-left:1px;margin-top:-1px"><path d="M9.4 7.9A4.3 4.3 0 1 1 8.4 2.6" fill="none" stroke="#555" stroke-width="1.6"/><path d="M6.6 3.4L11 1l-.6 4.8z" fill="#555"/></svg></span><span class="op o4"><svg width="10" height="10" viewBox="0 0 10 10"><path d="M1.6 1.6l6.8 6.8M8.4 1.6l-6.8 6.8" stroke="#555" stroke-width="2.3"/></svg></span></div></td></tr>
<tr class="even"><td class="c0"><span class="cb"></span></td><td>8711</td><td><a class="cj">埃及甲</a></td><td><a class="cj">萨瓦赫尔vs未来FC</a></td><td><a class="dt">2022-10-20 23:00</a></td><td>0</td><td><span class="cjt">未采集</span></td><td><a class="cj">开始波胆</a></td><td><span class="lk cjt">点击添加</span></td><td class="tm">2022-10-20 10:16</td><td><div class="ops"><span class="op o1"><svg width="11" height="13" viewBox="0 0 11 13" style="margin-top:0"><path d="M0.7 7.6v4.2h9.6V7.6" fill="none" stroke="#555" stroke-width="1.1"/><rect x="0.2" y="11.2" width="10.6" height="1.2" fill="#555"/><rect x="2.4" y="8.9" width="6.2" height="1.3" fill="#8a8a8a"/><path d="M2.6 7.3l5.6.5M3.1 5.2l5.4 1.4M3.9 3.1l5 2.2M5.4 1.3l4.2 3M7.3 0.2l2.9 3.4" stroke="#555" stroke-width="0.95"/></svg></span><span class="op o2"><svg width="12" height="10" viewBox="0 0 12 10" style="margin-top:-2px"><rect x="0" y="0.6" width="12" height="1.3" fill="#555"/><rect x="0" y="3.1" width="12" height="1.6" fill="#555"/><rect x="0" y="5.8" width="12" height="1.3" fill="#555"/><rect x="0" y="8.1" width="12" height="1.8" fill="#555"/></svg></span><span class="op o3"><svg width="12" height="12" viewBox="0 0 12 12" style="margin-left:1px;margin-top:-1px"><path d="M9.4 7.9A4.3 4.3 0 1 1 8.4 2.6" fill="none" stroke="#555" stroke-width="1.6"/><path d="M6.6 3.4L11 1l-.6 4.8z" fill="#555"/></svg></span><span class="op o4"><svg width="10" height="10" viewBox="0 0 10 10"><path d="M1.6 1.6l6.8 6.8M8.4 1.6l-6.8 6.8" stroke="#555" stroke-width="2.3"/></svg></span></div></td></tr>
<tr class="odd"><td class="c0"><span class="cb"></span></td><td>8706</td><td><a class="cj">塞甲联</a></td><td><a class="cj">贝游击vs纳普里</a></td><td><a class="dt">2022-10-20 22:45</a></td><td>0</td><td><span class="cjt">未采集</span></td><td><a class="cj">开始波胆</a></td><td><span class="lk cjt">点击添加</span></td><td class="tm">2022-10-20 10:16</td><td><div class="ops"><span class="op o1"><svg width="11" height="13" viewBox="0 0 11 13" style="margin-top:0"><path d="M0.7 7.6v4.2h9.6V7.6" fill="none" stroke="#555" stroke-width="1.1"/><rect x="0.2" y="11.2" width="10.6" height="1.2" fill="#555"/><rect x="2.4" y="8.9" width="6.2" height="1.3" fill="#8a8a8a"/><path d="M2.6 7.3l5.6.5M3.1 5.2l5.4 1.4M3.9 3.1l5 2.2M5.4 1.3l4.2 3M7.3 0.2l2.9 3.4" stroke="#555" stroke-width="0.95"/></svg></span><span class="op o2"><svg width="12" height="10" viewBox="0 0 12 10" style="margin-top:-2px"><rect x="0" y="0.6" width="12" height="1.3" fill="#555"/><rect x="0" y="3.1" width="12" height="1.6" fill="#555"/><rect x="0" y="5.8" width="12" height="1.3" fill="#555"/><rect x="0" y="8.1" width="12" height="1.8" fill="#555"/></svg></span><span class="op o3"><svg width="12" height="12" viewBox="0 0 12 12" style="margin-left:1px;margin-top:-1px"><path d="M9.4 7.9A4.3 4.3 0 1 1 8.4 2.6" fill="none" stroke="#555" stroke-width="1.6"/><path d="M6.6 3.4L11 1l-.6 4.8z" fill="#555"/></svg></span><span class="op o4"><svg width="10" height="10" viewBox="0 0 10 10"><path d="M1.6 1.6l6.8 6.8M8.4 1.6l-6.8 6.8" stroke="#555" stroke-width="2.3"/></svg></span></div></td></tr>
<tr class="even"><td class="c0"><span class="cb"></span></td><td>8703</td><td><a class="cj">巴林超</a></td><td><a class="cj">东里法vs慕哈瑞克</a></td><td><a class="dt">2022-10-20 22:40</a></td><td>0</td><td><span class="cjt">未采集</span></td><td><a class="cj">开始波胆</a></td><td><span class="lk cjt">点击添加</span></td><td class="tm">2022-10-20 10:16</td><td><div class="ops"><span class="op o1"><svg width="11" height="13" viewBox="0 0 11 13" style="margin-top:0"><path d="M0.7 7.6v4.2h9.6V7.6" fill="none" stroke="#555" stroke-width="1.1"/><rect x="0.2" y="11.2" width="10.6" height="1.2" fill="#555"/><rect x="2.4" y="8.9" width="6.2" height="1.3" fill="#8a8a8a"/><path d="M2.6 7.3l5.6.5M3.1 5.2l5.4 1.4M3.9 3.1l5 2.2M5.4 1.3l4.2 3M7.3 0.2l2.9 3.4" stroke="#555" stroke-width="0.95"/></svg></span><span class="op o2"><svg width="12" height="10" viewBox="0 0 12 10" style="margin-top:-2px"><rect x="0" y="0.6" width="12" height="1.3" fill="#555"/><rect x="0" y="3.1" width="12" height="1.6" fill="#555"/><rect x="0" y="5.8" width="12" height="1.3" fill="#555"/><rect x="0" y="8.1" width="12" height="1.8" fill="#555"/></svg></span><span class="op o3"><svg width="12" height="12" viewBox="0 0 12 12" style="margin-left:1px;margin-top:-1px"><path d="M9.4 7.9A4.3 4.3 0 1 1 8.4 2.6" fill="none" stroke="#555" stroke-width="1.6"/><path d="M6.6 3.4L11 1l-.6 4.8z" fill="#555"/></svg></span><span class="op o4"><svg width="10" height="10" viewBox="0 0 10 10"><path d="M1.6 1.6l6.8 6.8M8.4 1.6l-6.8 6.8" stroke="#555" stroke-width="2.3"/></svg></span></div></td></tr>
<tr class="odd"><td class="c0"><span class="cb"></span></td><td>8704</td><td><a class="cj">巴林超</a></td><td><a class="cj">麦纳麦vs阿尔哈拉</a></td><td><a class="dt">2022-10-20 22:40</a></td><td>0</td><td><span class="cjt">未采集</span></td><td><a class="cj">开始波胆</a></td><td><span class="lk cjt">点击添加</span></td><td class="tm">2022-10-20 10:16</td><td><div class="ops"><span class="op o1"><svg width="11" height="13" viewBox="0 0 11 13" style="margin-top:0"><path d="M0.7 7.6v4.2h9.6V7.6" fill="none" stroke="#555" stroke-width="1.1"/><rect x="0.2" y="11.2" width="10.6" height="1.2" fill="#555"/><rect x="2.4" y="8.9" width="6.2" height="1.3" fill="#8a8a8a"/><path d="M2.6 7.3l5.6.5M3.1 5.2l5.4 1.4M3.9 3.1l5 2.2M5.4 1.3l4.2 3M7.3 0.2l2.9 3.4" stroke="#555" stroke-width="0.95"/></svg></span><span class="op o2"><svg width="12" height="10" viewBox="0 0 12 10" style="margin-top:-2px"><rect x="0" y="0.6" width="12" height="1.3" fill="#555"/><rect x="0" y="3.1" width="12" height="1.6" fill="#555"/><rect x="0" y="5.8" width="12" height="1.3" fill="#555"/><rect x="0" y="8.1" width="12" height="1.8" fill="#555"/></svg></span><span class="op o3"><svg width="12" height="12" viewBox="0 0 12 12" style="margin-left:1px;margin-top:-1px"><path d="M9.4 7.9A4.3 4.3 0 1 1 8.4 2.6" fill="none" stroke="#555" stroke-width="1.6"/><path d="M6.6 3.4L11 1l-.6 4.8z" fill="#555"/></svg></span><span class="op o4"><svg width="10" height="10" viewBox="0 0 10 10"><path d="M1.6 1.6l6.8 6.8M8.4 1.6l-6.8 6.8" stroke="#555" stroke-width="2.3"/></svg></span></div></td></tr>
<tr class="even"><td class="c0"><span class="cb"></span></td><td>8705</td><td><a class="cj">科王子杯</a></td><td><a class="cj">杰拉vs卡兹玛</a></td><td><a class="dt">2022-10-20 22:40</a></td><td>0</td><td><span class="cjt">未采集</span></td><td><a class="cj">开始波胆</a></td><td><span class="lk cjt">点击添加</span></td><td class="tm">2022-10-20 10:16</td><td><div class="ops"><span class="op o1"><svg width="11" height="13" viewBox="0 0 11 13" style="margin-top:0"><path d="M0.7 7.6v4.2h9.6V7.6" fill="none" stroke="#555" stroke-width="1.1"/><rect x="0.2" y="11.2" width="10.6" height="1.2" fill="#555"/><rect x="2.4" y="8.9" width="6.2" height="1.3" fill="#8a8a8a"/><path d="M2.6 7.3l5.6.5M3.1 5.2l5.4 1.4M3.9 3.1l5 2.2M5.4 1.3l4.2 3M7.3 0.2l2.9 3.4" stroke="#555" stroke-width="0.95"/></svg></span><span class="op o2"><svg width="12" height="10" viewBox="0 0 12 10" style="margin-top:-2px"><rect x="0" y="0.6" width="12" height="1.3" fill="#555"/><rect x="0" y="3.1" width="12" height="1.6" fill="#555"/><rect x="0" y="5.8" width="12" height="1.3" fill="#555"/><rect x="0" y="8.1" width="12" height="1.8" fill="#555"/></svg></span><span class="op o3"><svg width="12" height="12" viewBox="0 0 12 12" style="margin-left:1px;margin-top:-1px"><path d="M9.4 7.9A4.3 4.3 0 1 1 8.4 2.6" fill="none" stroke="#555" stroke-width="1.6"/><path d="M6.6 3.4L11 1l-.6 4.8z" fill="#555"/></svg></span><span class="op o4"><svg width="10" height="10" viewBox="0 0 10 10"><path d="M1.6 1.6l6.8 6.8M8.4 1.6l-6.8 6.8" stroke="#555" stroke-width="2.3"/></svg></span></div></td></tr>
<tr class="odd"><td class="c0"><span class="cb"></span></td><td>8699</td><td><a class="cj">乌超</a></td><td><a class="cj">基 辅vs哈金工</a></td><td><a class="dt">2022-10-20 22:00</a></td><td>0</td><td><span class="cjt">未采集</span></td><td><a class="cj">开始波胆</a></td><td><span class="lk cjt">点击添加</span></td><td class="tm">2022-10-20 10:16</td><td><div class="ops"><span class="op o1"><svg width="11" height="13" viewBox="0 0 11 13" style="margin-top:0"><path d="M0.7 7.6v4.2h9.6V7.6" fill="none" stroke="#555" stroke-width="1.1"/><rect x="0.2" y="11.2" width="10.6" height="1.2" fill="#555"/><rect x="2.4" y="8.9" width="6.2" height="1.3" fill="#8a8a8a"/><path d="M2.6 7.3l5.6.5M3.1 5.2l5.4 1.4M3.9 3.1l5 2.2M5.4 1.3l4.2 3M7.3 0.2l2.9 3.4" stroke="#555" stroke-width="0.95"/></svg></span><span class="op o2"><svg width="12" height="10" viewBox="0 0 12 10" style="margin-top:-2px"><rect x="0" y="0.6" width="12" height="1.3" fill="#555"/><rect x="0" y="3.1" width="12" height="1.6" fill="#555"/><rect x="0" y="5.8" width="12" height="1.3" fill="#555"/><rect x="0" y="8.1" width="12" height="1.8" fill="#555"/></svg></span><span class="op o3"><svg width="12" height="12" viewBox="0 0 12 12" style="margin-left:1px;margin-top:-1px"><path d="M9.4 7.9A4.3 4.3 0 1 1 8.4 2.6" fill="none" stroke="#555" stroke-width="1.6"/><path d="M6.6 3.4L11 1l-.6 4.8z" fill="#555"/></svg></span><span class="op o4"><svg width="10" height="10" viewBox="0 0 10 10"><path d="M1.6 1.6l6.8 6.8M8.4 1.6l-6.8 6.8" stroke="#555" stroke-width="2.3"/></svg></span></div></td></tr>
<tr class="even"><td class="c0"><span class="cb"></span></td><td>8700</td><td><a class="cj">乌超</a></td><td><a class="cj">奥林匹克vs第聂伯</a></td><td><a class="dt">2022-10-20 22:00</a></td><td>0</td><td><span class="cjt">未采集</span></td><td><a class="cj">开始波胆</a></td><td><span class="lk cjt">点击添加</span></td><td class="tm">2022-10-20 10:16</td><td><div class="ops"><span class="op o1"><svg width="11" height="13" viewBox="0 0 11 13" style="margin-top:0"><path d="M0.7 7.6v4.2h9.6V7.6" fill="none" stroke="#555" stroke-width="1.1"/><rect x="0.2" y="11.2" width="10.6" height="1.2" fill="#555"/><rect x="2.4" y="8.9" width="6.2" height="1.3" fill="#8a8a8a"/><path d="M2.6 7.3l5.6.5M3.1 5.2l5.4 1.4M3.9 3.1l5 2.2M5.4 1.3l4.2 3M7.3 0.2l2.9 3.4" stroke="#555" stroke-width="0.95"/></svg></span><span class="op o2"><svg width="12" height="10" viewBox="0 0 12 10" style="margin-top:-2px"><rect x="0" y="0.6" width="12" height="1.3" fill="#555"/><rect x="0" y="3.1" width="12" height="1.6" fill="#555"/><rect x="0" y="5.8" width="12" height="1.3" fill="#555"/><rect x="0" y="8.1" width="12" height="1.8" fill="#555"/></svg></span><span class="op o3"><svg width="12" height="12" viewBox="0 0 12 12" style="margin-left:1px;margin-top:-1px"><path d="M9.4 7.9A4.3 4.3 0 1 1 8.4 2.6" fill="none" stroke="#555" stroke-width="1.6"/><path d="M6.6 3.4L11 1l-.6 4.8z" fill="#555"/></svg></span><span class="op o4"><svg width="10" height="10" viewBox="0 0 10 10"><path d="M1.6 1.6l6.8 6.8M8.4 1.6l-6.8 6.8" stroke="#555" stroke-width="2.3"/></svg></span></div></td></tr>
  </table>
</div>
</body></html>
